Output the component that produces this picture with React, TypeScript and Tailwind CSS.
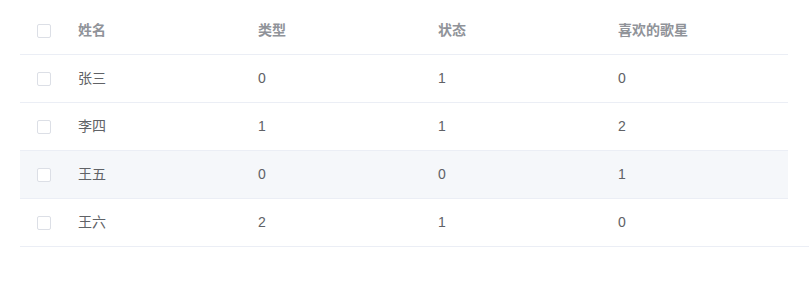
import React from "react";

const rows = [
  { name: "张三", type: "0", status: "1", star: "0" },
  { name: "李四", type: "1", status: "1", star: "2" },
  { name: "王五", type: "0", status: "0", star: "1", hover: true },
  { name: "王六", type: "2", status: "1", star: "0" },
];

function Checkbox() {
  return <span className="block w-[14px] h-[14px] rounded-[2px] border border-[#DCDFE6] bg-white box-border" />;
}

export default function App() {
  return (
    <div
      className="w-[809px] h-[290px] bg-white pt-[7px] text-[14px]"
      style={{ fontFamily: '"Liberation Sans", "Noto Sans CJK SC", sans-serif' }}
    >
      <div className="pl-[20px]">
        <div className="w-[768px] flex h-[48px] border-b border-[#EBEEF5] text-[#909399] font-bold">
          <div className="w-[48px] flex items-center justify-center">
            <Checkbox />
          </div>
          <div className="w-[180px] flex items-center px-[10px]">姓名</div>
          <div className="w-[180px] flex items-center px-[10px]">类型</div>
          <div className="w-[180px] flex items-center px-[10px]">状态</div>
          <div className="w-[180px] flex items-center px-[10px]">喜欢的歌星</div>
        </div>
        {rows.map((r, i) => (
          <div
            key={i}
            className={
              "w-[768px] flex text-[#606266] " +
              (i < rows.length - 1 ? "h-[48px] border-b border-[#EBEEF5] " : "h-[47px] ") +
              (r.hover ? "bg-[#F5F7FA]" : "bg-white")
            }
          >
            <div className="w-[48px] flex items-center justify-center">
              <Checkbox />
            </div>
            <div className="w-[180px] flex items-center px-[10px]">{r.name}</div>
            <div className="w-[180px] flex items-center px-[10px]">{r.type}</div>
            <div className="w-[180px] flex items-center px-[10px]">{r.status}</div>
            <div className="w-[180px] flex items-center px-[10px]">{r.star}</div>
          </div>
        ))}
        <div className="h-px bg-[#EBEEF5]" />
      </div>
    </div>
  );
}
